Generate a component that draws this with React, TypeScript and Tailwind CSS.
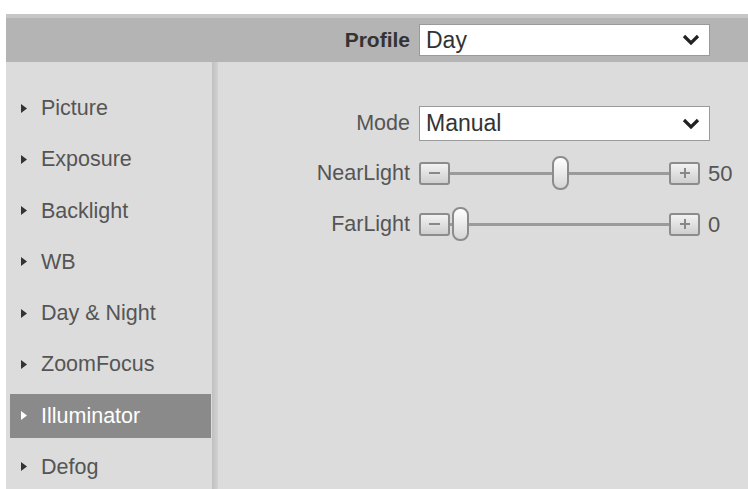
import { useState } from 'react'

const menu = ['Picture', 'Exposure', 'Backlight', 'WB', 'Day & Night', 'ZoomFocus', 'Illuminator', 'Defog']

function Chevron() {
  return (
    <svg width="18" height="12" viewBox="0 0 18 12" className="shrink-0">
      <path d="M2 2 L9 9 L16 2" fill="none" stroke="#222" strokeWidth="3.2" />
    </svg>
  )
}

function Select({ value, h }: { value: string; h: string }) {
  return (
    <div
      className={`flex w-[291px] items-center justify-between border border-[#9a9a9a] bg-white pl-[6px] pr-[9px] text-[23px] text-[#333] ${h}`}
    >
      <span className="leading-none">{value}</span>
      <Chevron />
    </div>
  )
}

function StepButton({ sign }: { sign: '-' | '+' }) {
  return (
    <div className="flex h-[23px] w-[31px] shrink-0 items-center justify-center rounded-[3px] border-2 border-[#8c8c8c] bg-gradient-to-b from-[#f2f2f2] to-[#cfcfcf]">
      {sign === '-' ? (
        <div className="h-[2px] w-[11px] bg-[#888]" />
      ) : (
        <svg width="12" height="12" viewBox="0 0 12 12">
          <path d="M6 1 V11 M1 6 H11" stroke="#888" strokeWidth="2" />
        </svg>
      )}
    </div>
  )
}

function Slider({ value }: { value: number }) {
  return (
    <div className="flex h-[34px] items-center">
      <StepButton sign="-" />
      <div className="relative h-[34px] w-[219px]">
        <div className="absolute top-[16px] right-0 left-0 h-[3px] bg-[#9b9b9b]" />
        <div
          className="absolute top-0 h-[34px] w-[17px] rounded-[8px] border-2 border-[#8c8c8c] bg-gradient-to-b from-[#ffffff] to-[#d6d6d6]"
          style={{ left: 2 + (value / 100) * 200 }}
        />
      </div>
      <StepButton sign="+" />
      <span className="ml-[8px] text-[22px] text-[#555]">{value}</span>
    </div>
  )
}

export default function App() {
  const [active] = useState('Illuminator')

  return (
    <div className="h-[489px] w-[748px] overflow-hidden bg-white pt-[14px] pl-[6px] font-['Liberation_Sans',Arial,sans-serif]">
      <div className="flex h-[48px] items-center border-t-4 border-[#c6c6c6] bg-[#b4b4b4] pl-[206px]">
        <span className="w-[207px] pr-[9px] text-right text-[21px] font-bold text-[#333]">Profile</span>
        <Select value="Day" h="h-[32px]" />
      </div>

      <div className="flex h-[427px] bg-[#dcdcdc]">
        <div className="flex w-[206px] flex-col gap-[7px] pt-[24px] pr-[1px] pl-[4px]">
          {menu.map((m) => {
            const on = m === active
            return (
              <div
                key={m}
                className={`flex h-[45px] items-center gap-[14px] pl-[11px] text-[21.5px] ${
                  on ? 'bg-[#8a8a8a] text-white' : 'text-[#555]'
                }`}
              >
                <svg width="6" height="9" viewBox="0 0 6 9">
                  <path d="M0 0 L6 4.5 L0 9 Z" fill={on ? '#fff' : '#333'} />
                </svg>
                <span>{m}</span>
              </div>
            )
          })}
        </div>

        <div className="w-[6px] bg-gradient-to-r from-[#c0c0c0] to-[#d2d2d2]" />

        <div className="flex flex-col pt-[44px]">
          <div className="flex items-center">
            <span className="w-[201px] pr-[9px] text-right text-[21.5px] text-[#555]">Mode</span>
            <Select value="Manual" h="h-[35px]" />
          </div>
          <div className="mt-[15px] flex items-center">
            <span className="w-[201px] pr-[9px] text-right text-[21.5px] text-[#555]">NearLight</span>
            <Slider value={50} />
          </div>
          <div className="mt-[17px] flex items-center">
            <span className="w-[201px] pr-[9px] text-right text-[21.5px] text-[#555]">FarLight</span>
            <Slider value={0} />
          </div>
        </div>
      </div>
    </div>
  )
}
